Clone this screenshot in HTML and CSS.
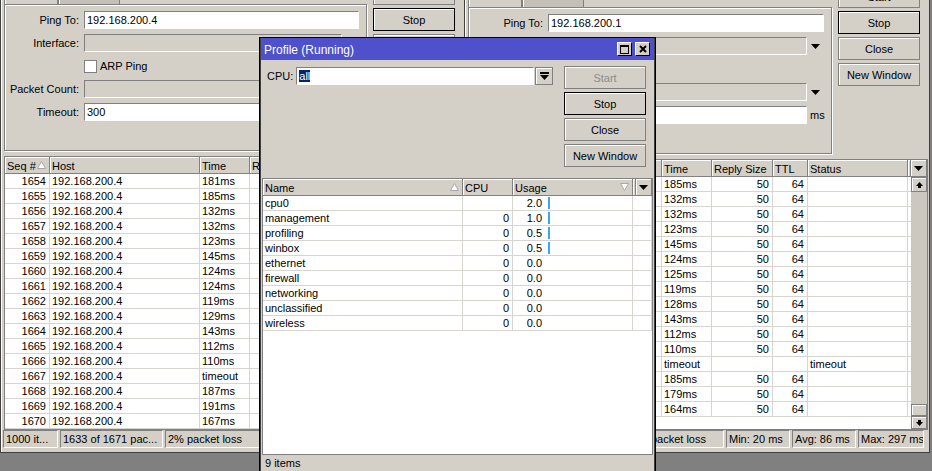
FILE: index.html
```html
<!DOCTYPE html>
<html>

<head>
    <meta charset="utf-8">
    <meta name="viewport" content="width=device-width,initial-scale=1.0">
    <title>Winbox - Ping / Profile</title>
    <link rel="stylesheet" href="styles.css">
</head>

<body>

    <!-- ping window 1 -->
    <div class="window ping ping-left">
        <div class="top">
            <div class="formcol">
                <div class="tabs"><div class="tab active"></div><div class="tab idle"></div></div>
                <div class="panel">
                    <div class="frow"><label>Ping To:</label><div class="field">192.168.200.4</div></div>
                    <div class="frow"><label>Interface:</label><div class="field off"></div><div class="slot"><svg width="9" height="5" viewBox="0 0 9 5"><path d="M0 0H9L4.5 5Z"/></svg></div></div>
                    <div class="frow"><label></label><div class="check"></div><span>ARP Ping</span></div>
                    <div class="frow"><label>Packet Count:</label><div class="field off"></div><div class="slot"><svg width="9" height="5" viewBox="0 0 9 5"><path d="M0 0H9L4.5 5Z"/></svg></div></div>
                    <div class="frow"><label>Timeout:</label><div class="field">300</div><div class="slot unit">ms</div></div>
                </div>
            </div>
            <div class="buttons">
                <div class="btn">Start</div>
                <div class="btn default">Stop</div>
                <div class="btn">Close</div>
                <div class="btn">New Window</div>
            </div>
        </div>

        <div class="grid">
            <div class="ghead">
                <div class="hc w-seq"><span>Seq #</span><svg class="sort" width="9" height="8" viewBox="0 0 9 8"><path d="M4.5 .5L8.5 7.5H.5Z"/></svg></div>
                <div class="hc w-host">Host</div>
                <div class="hc w-time">Time</div>
                <div class="hc w-size">Reply Size</div>
                <div class="hc w-ttl">TTL</div>
                <div class="hc w-status">Status</div>
                <div class="hc fill"></div>
                <div class="hc hdrop"><svg width="9" height="5" viewBox="0 0 9 5"><path d="M0 0H9L4.5 5Z"/></svg></div>
            </div>
            <div class="gbody">
                <div class="rows">
                    <div class="gr"><div class="c w-seq num">1654</div><div class="c w-host">192.168.200.4</div><div class="c w-time">181ms</div><div class="c w-size num">50</div><div class="c w-ttl num">64</div><div class="c w-status"></div><div class="c fill"></div></div>
                    <div class="gr"><div class="c w-seq num">1655</div><div class="c w-host">192.168.200.4</div><div class="c w-time">185ms</div><div class="c w-size num">50</div><div class="c w-ttl num">64</div><div class="c w-status"></div><div class="c fill"></div></div>
                    <div class="gr"><div class="c w-seq num">1656</div><div class="c w-host">192.168.200.4</div><div class="c w-time">132ms</div><div class="c w-size num">50</div><div class="c w-ttl num">64</div><div class="c w-status"></div><div class="c fill"></div></div>
                    <div class="gr"><div class="c w-seq num">1657</div><div class="c w-host">192.168.200.4</div><div class="c w-time">132ms</div><div class="c w-size num">50</div><div class="c w-ttl num">64</div><div class="c w-status"></div><div class="c fill"></div></div>
                    <div class="gr"><div class="c w-seq num">1658</div><div class="c w-host">192.168.200.4</div><div class="c w-time">123ms</div><div class="c w-size num">50</div><div class="c w-ttl num">64</div><div class="c w-status"></div><div class="c fill"></div></div>
                    <div class="gr"><div class="c w-seq num">1659</div><div class="c w-host">192.168.200.4</div><div class="c w-time">145ms</div><div class="c w-size num">50</div><div class="c w-ttl num">64</div><div class="c w-status"></div><div class="c fill"></div></div>
                    <div class="gr"><div class="c w-seq num">1660</div><div class="c w-host">192.168.200.4</div><div class="c w-time">124ms</div><div class="c w-size num">50</div><div class="c w-ttl num">64</div><div class="c w-status"></div><div class="c fill"></div></div>
                    <div class="gr"><div class="c w-seq num">1661</div><div class="c w-host">192.168.200.4</div><div class="c w-time">124ms</div><div class="c w-size num">50</div><div class="c w-ttl num">64</div><div class="c w-status"></div><div class="c fill"></div></div>
                    <div class="gr"><div class="c w-seq num">1662</div><div class="c w-host">192.168.200.4</div><div class="c w-time">119ms</div><div class="c w-size num">50</div><div class="c w-ttl num">64</div><div class="c w-status"></div><div class="c fill"></div></div>
                    <div class="gr"><div class="c w-seq num">1663</div><div class="c w-host">192.168.200.4</div><div class="c w-time">129ms</div><div class="c w-size num">50</div><div class="c w-ttl num">64</div><div class="c w-status"></div><div class="c fill"></div></div>
                    <div class="gr"><div class="c w-seq num">1664</div><div class="c w-host">192.168.200.4</div><div class="c w-time">143ms</div><div class="c w-size num">50</div><div class="c w-ttl num">64</div><div class="c w-status"></div><div class="c fill"></div></div>
                    <div class="gr"><div class="c w-seq num">1665</div><div class="c w-host">192.168.200.4</div><div class="c w-time">112ms</div><div class="c w-size num">50</div><div class="c w-ttl num">64</div><div class="c w-status"></div><div class="c fill"></div></div>
                    <div class="gr"><div class="c w-seq num">1666</div><div class="c w-host">192.168.200.4</div><div class="c w-time">110ms</div><div class="c w-size num">50</div><div class="c w-ttl num">64</div><div class="c w-status"></div><div class="c fill"></div></div>
                    <div class="gr"><div class="c w-seq num">1667</div><div class="c w-host">192.168.200.4</div><div class="c w-time">timeout</div><div class="c w-size num"></div><div class="c w-ttl num"></div><div class="c w-status">timeout</div><div class="c fill"></div></div>
                    <div class="gr"><div class="c w-seq num">1668</div><div class="c w-host">192.168.200.4</div><div class="c w-time">187ms</div><div class="c w-size num">50</div><div class="c w-ttl num">64</div><div class="c w-status"></div><div class="c fill"></div></div>
                    <div class="gr"><div class="c w-seq num">1669</div><div class="c w-host">192.168.200.4</div><div class="c w-time">191ms</div><div class="c w-size num">50</div><div class="c w-ttl num">64</div><div class="c w-status"></div><div class="c fill"></div></div>
                    <div class="gr"><div class="c w-seq num">1670</div><div class="c w-host">192.168.200.4</div><div class="c w-time">167ms</div><div class="c w-size num">50</div><div class="c w-ttl num">64</div><div class="c w-status"></div><div class="c fill"></div></div>
                </div>
            </div>
        </div>

        <div class="status">
            <div class="seg s-items">1000 it...</div>
            <div class="seg s-packets">1633 of 1671 pac...</div>
            <div class="seg s-loss">2% packet loss</div>
            <div class="seg s-min">Min: 21 ms</div>
            <div class="seg s-avg">Avg: 142 ms</div>
            <div class="seg s-max">Max: 301 ms</div>
        </div>
    </div>

    <!-- ping window 2 -->
    <div class="window ping ping-right">
        <div class="top">
            <div class="formcol">
                <div class="tabs"><div class="tab active"></div><div class="tab idle"></div></div>
                <div class="panel">
                    <div class="frow"><label>Ping To:</label><div class="field">192.168.200.1</div></div>
                    <div class="frow"><label>Interface:</label><div class="field off"></div><div class="slot"><svg width="9" height="5" viewBox="0 0 9 5"><path d="M0 0H9L4.5 5Z"/></svg></div></div>
                    <div class="frow"><label></label><div class="check"></div><span>ARP Ping</span></div>
                    <div class="frow"><label>Packet Count:</label><div class="field off"></div><div class="slot"><svg width="9" height="5" viewBox="0 0 9 5"><path d="M0 0H9L4.5 5Z"/></svg></div></div>
                    <div class="frow"><label>Timeout:</label><div class="field">300</div><div class="slot unit">ms</div></div>
                </div>
            </div>
            <div class="buttons">
                <div class="btn">Start</div>
                <div class="btn default">Stop</div>
                <div class="btn">Close</div>
                <div class="btn">New Window</div>
            </div>
        </div>

        <div class="grid">
            <div class="ghead">
                <div class="hc w-seq"><span>Seq #</span><svg class="sort" width="9" height="8" viewBox="0 0 9 8"><path d="M4.5 .5L8.5 7.5H.5Z"/></svg></div>
                <div class="hc w-host narrow">Host</div>
                <div class="hc w-time">Time</div>
                <div class="hc w-size">Reply Size</div>
                <div class="hc w-ttl">TTL</div>
                <div class="hc w-status">Status</div>
                <div class="hc fill"></div>
                <div class="hc hdrop"><svg width="9" height="5" viewBox="0 0 9 5"><path d="M0 0H9L4.5 5Z"/></svg></div>
            </div>
            <div class="gbody">
                <div class="rows">
                    <div class="gr"><div class="c w-seq num">1655</div><div class="c w-host narrow">192.168.200.1</div><div class="c w-time">185ms</div><div class="c w-size num">50</div><div class="c w-ttl num">64</div><div class="c w-status"></div><div class="c fill"></div></div>
                    <div class="gr"><div class="c w-seq num">1656</div><div class="c w-host narrow">192.168.200.1</div><div class="c w-time">132ms</div><div class="c w-size num">50</div><div class="c w-ttl num">64</div><div class="c w-status"></div><div class="c fill"></div></div>
                    <div class="gr"><div class="c w-seq num">1657</div><div class="c w-host narrow">192.168.200.1</div><div class="c w-time">132ms</div><div class="c w-size num">50</div><div class="c w-ttl num">64</div><div class="c w-status"></div><div class="c fill"></div></div>
                    <div class="gr"><div class="c w-seq num">1658</div><div class="c w-host narrow">192.168.200.1</div><div class="c w-time">123ms</div><div class="c w-size num">50</div><div class="c w-ttl num">64</div><div class="c w-status"></div><div class="c fill"></div></div>
                    <div class="gr"><div class="c w-seq num">1659</div><div class="c w-host narrow">192.168.200.1</div><div class="c w-time">145ms</div><div class="c w-size num">50</div><div class="c w-ttl num">64</div><div class="c w-status"></div><div class="c fill"></div></div>
                    <div class="gr"><div class="c w-seq num">1660</div><div class="c w-host narrow">192.168.200.1</div><div class="c w-time">124ms</div><div class="c w-size num">50</div><div class="c w-ttl num">64</div><div class="c w-status"></div><div class="c fill"></div></div>
                    <div class="gr"><div class="c w-seq num">1661</div><div class="c w-host narrow">192.168.200.1</div><div class="c w-time">125ms</div><div class="c w-size num">50</div><div class="c w-ttl num">64</div><div class="c w-status"></div><div class="c fill"></div></div>
                    <div class="gr"><div class="c w-seq num">1662</div><div class="c w-host narrow">192.168.200.1</div><div class="c w-time">119ms</div><div class="c w-size num">50</div><div class="c w-ttl num">64</div><div class="c w-status"></div><div class="c fill"></div></div>
                    <div class="gr"><div class="c w-seq num">1663</div><div class="c w-host narrow">192.168.200.1</div><div class="c w-time">128ms</div><div class="c w-size num">50</div><div class="c w-ttl num">64</div><div class="c w-status"></div><div class="c fill"></div></div>
                    <div class="gr"><div class="c w-seq num">1664</div><div class="c w-host narrow">192.168.200.1</div><div class="c w-time">143ms</div><div class="c w-size num">50</div><div class="c w-ttl num">64</div><div class="c w-status"></div><div class="c fill"></div></div>
                    <div class="gr"><div class="c w-seq num">1665</div><div class="c w-host narrow">192.168.200.1</div><div class="c w-time">112ms</div><div class="c w-size num">50</div><div class="c w-ttl num">64</div><div class="c w-status"></div><div class="c fill"></div></div>
                    <div class="gr"><div class="c w-seq num">1666</div><div class="c w-host narrow">192.168.200.1</div><div class="c w-time">110ms</div><div class="c w-size num">50</div><div class="c w-ttl num">64</div><div class="c w-status"></div><div class="c fill"></div></div>
                    <div class="gr"><div class="c w-seq num">1667</div><div class="c w-host narrow">192.168.200.1</div><div class="c w-time">timeout</div><div class="c w-size num"></div><div class="c w-ttl num"></div><div class="c w-status">timeout</div><div class="c fill"></div></div>
                    <div class="gr"><div class="c w-seq num">1668</div><div class="c w-host narrow">192.168.200.1</div><div class="c w-time">185ms</div><div class="c w-size num">50</div><div class="c w-ttl num">64</div><div class="c w-status"></div><div class="c fill"></div></div>
                    <div class="gr"><div class="c w-seq num">1669</div><div class="c w-host narrow">192.168.200.1</div><div class="c w-time">179ms</div><div class="c w-size num">50</div><div class="c w-ttl num">64</div><div class="c w-status"></div><div class="c fill"></div></div>
                    <div class="gr"><div class="c w-seq num">1670</div><div class="c w-host narrow">192.168.200.1</div><div class="c w-time">164ms</div><div class="c w-size num">50</div><div class="c w-ttl num">64</div><div class="c w-status"></div><div class="c fill"></div></div>
                </div>
                <div class="vscroll">
                    <div class="sbtn"><svg width="7" height="6" viewBox="0 0 7 6"><path d="M3.5 0L7 4H5V6H2V4H0Z"/></svg></div>
                    <div class="track"></div>
                    <div class="thumb"></div>
                    <div class="sbtn down"><svg width="7" height="6" viewBox="0 0 7 6"><path d="M2 0H5V2H7L3.5 6L0 2H2Z"/></svg></div>
                </div>
            </div>
        </div>

        <div class="status">
            <div class="seg s-items">1000 it...</div>
            <div class="seg s-packets">1636 of 1671 pac...</div>
            <div class="seg s-loss">2% packet loss</div>
            <div class="seg s-min">Min: 20 ms</div>
            <div class="seg s-avg">Avg: 86 ms</div>
            <div class="seg s-max">Max: 297 ms</div>
        </div>
    </div>

    <!-- profile window (on top) -->
    <div class="window profile">
        <div class="titlebar">
            <span class="title">Profile (Running)</span>
            <div class="tbtns">
                <div class="tbtn"><svg width="9" height="9" viewBox="0 0 9 9"><rect x=".5" y=".5" width="8" height="8" fill="none" stroke="#000"/><rect width="9" height="2"/></svg></div>
                <div class="tbtn"><svg width="8" height="8" viewBox="0 0 8 8"><path d="M1 1L7 7M7 1L1 7" stroke="#000" stroke-width="2"/></svg></div>
            </div>
        </div>

        <div class="pbody">
            <div class="pform">
                <div class="cpurow">
                    <label>CPU:</label>
                    <div class="field"><span class="sel">all</span></div>
                    <div class="ddbtn"><svg width="9" height="9" viewBox="0 0 9 9"><rect y="0" width="9" height="2"/><path d="M0 3H9L4.5 8Z"/></svg></div>
                </div>
            </div>
            <div class="buttons">
                <div class="btn disabled">Start</div>
                <div class="btn default">Stop</div>
                <div class="btn">Close</div>
                <div class="btn">New Window</div>
            </div>
        </div>

        <div class="grid">
            <div class="ghead">
                <div class="hc w-name"><span>Name</span><svg class="sort" width="9" height="8" viewBox="0 0 9 8"><path d="M4.5 .5L8.5 7.5H.5Z"/></svg></div>
                <div class="hc w-cpu">CPU</div>
                <div class="hc w-usage"><span>Usage</span><svg class="sort" width="9" height="8" viewBox="0 0 9 8"><path d="M.5 .5H8.5L4.5 7.5Z"/></svg></div>
                <div class="hc fill"></div>
                <div class="hc hdrop"><svg width="9" height="5" viewBox="0 0 9 5"><path d="M0 0H9L4.5 5Z"/></svg></div>
            </div>
            <div class="gbody">
                <div class="rows">
                    <div class="gr"><div class="c w-name">cpu0</div><div class="c w-cpu num"></div><div class="c w-usage"><span class="uval">2.0</span><span class="ubar"></span></div><div class="c fill"></div></div>
                    <div class="gr"><div class="c w-name">management</div><div class="c w-cpu num">0</div><div class="c w-usage"><span class="uval">1.0</span><span class="ubar"></span></div><div class="c fill"></div></div>
                    <div class="gr"><div class="c w-name">profiling</div><div class="c w-cpu num">0</div><div class="c w-usage"><span class="uval">0.5</span><span class="ubar"></span></div><div class="c fill"></div></div>
                    <div class="gr"><div class="c w-name">winbox</div><div class="c w-cpu num">0</div><div class="c w-usage"><span class="uval">0.5</span><span class="ubar"></span></div><div class="c fill"></div></div>
                    <div class="gr"><div class="c w-name">ethernet</div><div class="c w-cpu num">0</div><div class="c w-usage"><span class="uval">0.0</span></div><div class="c fill"></div></div>
                    <div class="gr"><div class="c w-name">firewall</div><div class="c w-cpu num">0</div><div class="c w-usage"><span class="uval">0.0</span></div><div class="c fill"></div></div>
                    <div class="gr"><div class="c w-name">networking</div><div class="c w-cpu num">0</div><div class="c w-usage"><span class="uval">0.0</span></div><div class="c fill"></div></div>
                    <div class="gr"><div class="c w-name">unclassified</div><div class="c w-cpu num">0</div><div class="c w-usage"><span class="uval">0.0</span></div><div class="c fill"></div></div>
                    <div class="gr"><div class="c w-name">wireless</div><div class="c w-cpu num">0</div><div class="c w-usage"><span class="uval">0.0</span></div><div class="c fill"></div></div>
                </div>
            </div>
        </div>

        <div class="status">
            <div class="seg plain">9 items</div>
        </div>
    </div>

</body>

</html>
```

FILE: styles.css
```css
body {
    margin: 0;
    width: 932px;
    height: 471px;
    overflow: hidden;
    position: relative;
    background-color: #808080;
    font-family: "Liberation Sans", Arial, sans-serif;
    font-size: 11px;
    color: #000;
}

/* windows */

.window {
    position: absolute;
    box-sizing: border-box;
    display: flex;
    flex-direction: column;
    background-color: #d4d0c8;
    border: 1px solid #404040;
    box-shadow: inset 1px 1px #fff;
}

.ping-left {
    left: 0;
    top: -19px;
    width: 465px;
    height: 472px;
}

.ping-right {
    left: 464px;
    top: -16px;
    width: 466px;
    height: 469px;
}

.top {
    display: flex;
    height: 169px;
    flex: none;
}

.formcol {
    flex: 1;
    margin-left: 3px;
    display: flex;
    flex-direction: column;
}

.tabs {
    height: 22px;
    display: flex;
    align-items: flex-end;
}

.tab {
    height: 19px;
    box-sizing: border-box;
    border: 1px solid #808080;
    border-bottom: none;
    box-shadow: inset 1px 1px #fff;
}

.tab.active {
    width: 54px;
}

.tab.idle {
    width: 62px;
    background-color: #c4c0b8;
}

.panel {
    height: 147px;
    box-sizing: border-box;
    border: 1px solid #808080;
    box-shadow: inset 1px 1px #fff, 1px 1px #fff;
    padding-top: 6px;
    display: flex;
    flex-direction: column;
    gap: 5px;
}

.frow {
    display: flex;
    align-items: center;
    height: 18px;
    padding-right: 7px;
}

.frow label {
    width: 74px;
    flex: none;
    text-align: right;
    margin-right: 5px;
}

.field {
    flex: 1;
    height: 18px;
    box-sizing: border-box;
    border: 1px solid;
    border-color: #808080 #fff #fff #808080;
    background-color: #fff;
    padding-left: 2px;
    line-height: 16px;
    white-space: nowrap;
    overflow: hidden;
}

.field.off {
    background-color: #d4d0c8;
}

.slot {
    width: 17px;
    flex: none;
    display: flex;
    align-items: center;
    justify-content: center;
}

.slot.unit {
    justify-content: flex-start;
    padding-left: 3px;
    box-sizing: border-box;
}

.check {
    width: 13px;
    height: 13px;
    box-sizing: border-box;
    border: 1px solid #808080;
    background-color: #fff;
    margin-right: 3px;
}

.buttons {
    width: 82px;
    flex: none;
    margin: 0 9px 0 6px;
    display: flex;
    flex-direction: column;
    gap: 3px;
}

.btn {
    height: 23px;
    box-sizing: border-box;
    border: 1px solid #808080;
    box-shadow: inset 1px 1px #fff;
    display: flex;
    align-items: center;
    justify-content: center;
}

.btn.default {
    border-color: #000;
}

.btn.disabled {
    color: #8c8c8c;
}

/* lists */

.grid {
    flex: 1;
    min-height: 0;
    margin: 5px 1px 0 3px;
    border: 1px solid #808080;
    background-color: #fff;
    display: flex;
    flex-direction: column;
    overflow: hidden;
}

.ghead {
    display: flex;
    height: 17px;
    flex: none;
    background-color: #d4d0c8;
}

.hc {
    flex: none;
    box-sizing: border-box;
    border-right: 1px solid #808080;
    border-bottom: 1px solid #808080;
    box-shadow: inset 1px 1px #fff;
    padding: 2px 3px 0 2px;
    display: flex;
    align-items: center;
    justify-content: space-between;
    white-space: nowrap;
    overflow: hidden;
}

.hc.fill {
    flex: 1;
    min-width: 0;
    padding: 0;
}

.hc.hdrop {
    width: 16px;
    padding: 0;
    justify-content: center;
}

.sort {
    flex: none;
    margin-top: -2px;
}

.sort path {
    fill: #fff;
    stroke: #a8a8a8;
}

.gbody {
    flex: 1;
    min-height: 0;
    display: flex;
}

.rows {
    flex: 1;
    min-width: 0;
    overflow: hidden;
}

.gr {
    display: flex;
    height: 15px;
}

.c {
    flex: none;
    box-sizing: border-box;
    border-right: 1px solid #d8d5d0;
    border-bottom: 1px solid #d8d5d0;
    line-height: 14px;
    padding: 0 2px;
    white-space: nowrap;
    overflow: hidden;
}

.c.num {
    text-align: right;
    padding-right: 3px;
}

.c.fill {
    flex: 1;
    min-width: 0;
}

.w-seq { width: 45px; }
.w-host { width: 150px; }
.w-host.narrow { width: 148px; }
.w-time { width: 50px; }
.w-size { width: 61px; }
.w-ttl { width: 35px; }
.w-status { width: 100px; }
.w-name { width: 200px; }
.w-cpu { width: 50px; }
.w-usage { width: 120px; }

.c.w-usage {
    display: flex;
    align-items: center;
    padding: 0;
}

.uval {
    width: 29px;
    text-align: right;
}

.ubar {
    width: 2px;
    height: 12px;
    margin-left: 6px;
    background-color: #3aa8ea;
}

.vscroll {
    width: 16px;
    flex: none;
    display: flex;
    flex-direction: column;
    background-color: #d4d0c8;
}

.sbtn {
    height: 15px;
    flex: none;
    box-sizing: border-box;
    border: 1px solid #808080;
    box-shadow: inset 1px 1px #fff;
    display: flex;
    align-items: center;
    justify-content: center;
}

.sbtn.down {
    height: 13px;
}

.track {
    flex: 1;
    background-color: #ccc8c0;
}

.thumb {
    height: 12px;
    flex: none;
    box-sizing: border-box;
    border: 1px solid #808080;
    box-shadow: inset 1px 1px #fff;
    background-color: #d4d0c8;
}

.status {
    height: 18px;
    flex: none;
    margin: 0 0 4px 2px;
    display: flex;
    gap: 2px;
}

.seg {
    flex: none;
    box-sizing: border-box;
    border: 1px solid;
    border-color: #808080 #fff #fff #808080;
    padding-left: 2px;
    line-height: 16px;
    white-space: nowrap;
    overflow: hidden;
}

.s-items { width: 55px; }
.s-packets { width: 103px; }
.s-loss { width: 95px; }
.s-min { width: 64px; }
.s-avg { width: 64px; }
.s-max { width: 66px; }

/* profile */

.profile {
    left: 259px;
    top: 37px;
    width: 397px;
    height: 440px;
    border-color: #000;
    box-shadow: inset 1px 0 #404040, inset -1px 0 #404040;
}

.titlebar {
    height: 22px;
    flex: none;
    margin: 0 1px;
    padding: 0 4px 0 3px;
    display: flex;
    align-items: center;
    justify-content: space-between;
    background-color: #4e50cc;
    color: #fff;
    font-size: 12px;
}

.title {
    margin-top: 2px;
}

.tbtns {
    display: flex;
    gap: 3px;
}

.tbtn {
    width: 15px;
    height: 14px;
    box-sizing: border-box;
    border: 1px solid;
    border-color: #fff #000 #000 #fff;
    background-color: #d4d0c8;
    display: flex;
    align-items: center;
    justify-content: center;
}

.pbody {
    display: flex;
    flex: none;
    padding: 6px 0 11px 7px;
}

.pbody .buttons {
    margin-left: 11px;
    margin-right: 9px;
}

.pform {
    flex: 1;
}

.cpurow {
    display: flex;
    align-items: center;
    height: 18px;
    margin-top: 1px;
}

.cpurow label {
    margin-right: 3px;
}

.sel {
    background-color: #0a246a;
    color: #fff;
}

.ddbtn {
    width: 18px;
    height: 18px;
    margin-left: 1px;
    box-sizing: border-box;
    border: 1px solid #808080;
    box-shadow: inset 1px 1px #fff;
    display: flex;
    align-items: center;
    justify-content: center;
}

.profile .grid {
    flex: none;
    height: 275px;
    margin: 0 2px;
}

.profile .status {
    margin: 0 2px;
}

.seg.plain {
    flex: 1;
    border: none;
    padding-left: 3px;
}
```
